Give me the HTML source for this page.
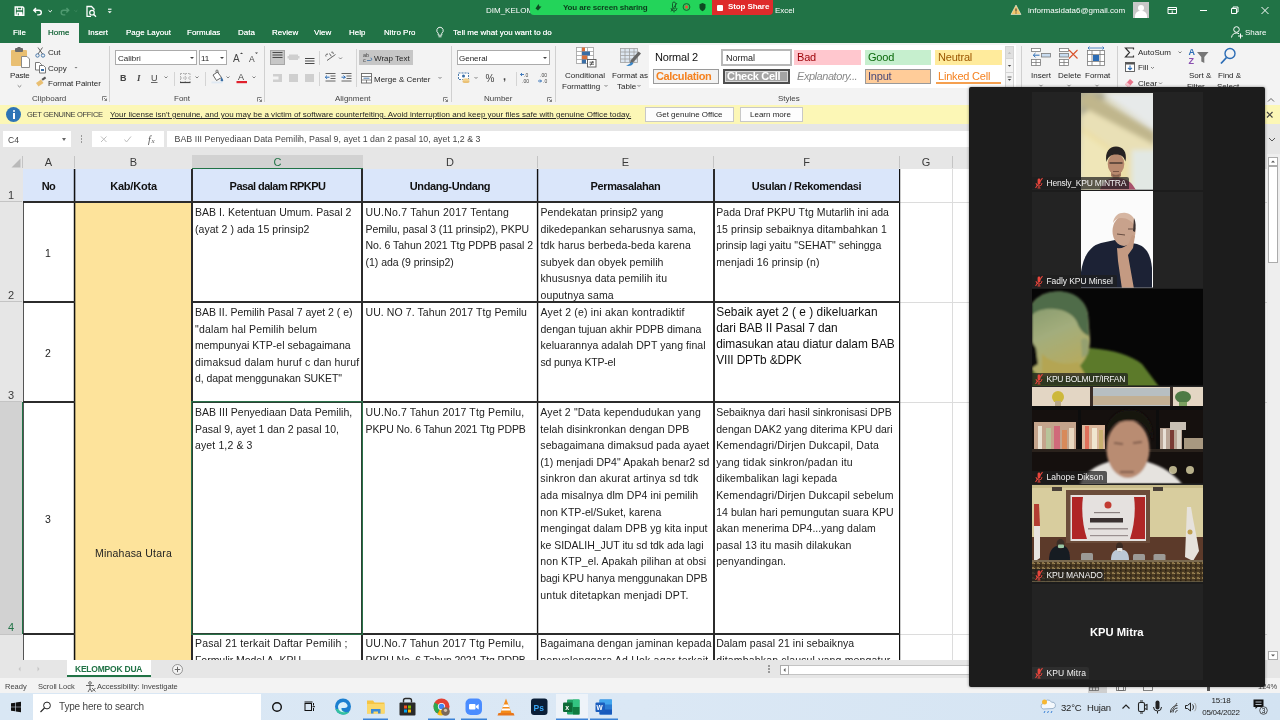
<!DOCTYPE html>
<html><head><meta charset="utf-8">
<style>
*{box-sizing:border-box;margin:0;padding:0}
html,body{width:1280px;height:720px;overflow:hidden;background:#fff;font-family:"Liberation Sans",sans-serif;font-size:9px;color:#262626}
.a{position:absolute;white-space:nowrap}
#top{left:0;top:0;width:1280px;height:43px;background:#217346}
#ribbon{left:0;top:43px;width:1280px;height:62px;background:#f3f3f3}
#ybar{left:0;top:105px;width:1280px;height:19px;background:#fcf7b6}
#fbar{left:0;top:124px;width:1280px;height:30px;background:#e6e6e6}
#colhdr{left:0;top:154px;width:1280px;height:15px;background:#e6e6e6}
#rowhdr{left:0;top:169px;width:23px;height:491px;background:#e6e6e6}
#grid{left:23px;top:169px;width:1244px;height:491px;background:#fff;overflow:hidden}
#tabs{left:0;top:660px;width:1280px;height:18px;background:#e6e6e6}
#status{left:0;top:678px;width:1280px;height:15px;background:#f3f3f3}
#task{left:0;top:693px;width:1280px;height:27px;background:linear-gradient(90deg,#d9e7f4,#dbe8f5 50%,#d3e3f2)}
</style></head><body><div id="root" style="position:absolute;left:0;top:0;width:1280px;height:720px;overflow:hidden;will-change:transform">
<div id="top" class="a"></div>
<div id="ribbon" class="a"></div>
<div id="ybar" class="a"></div>
<div id="fbar" class="a"></div>
<div id="colhdr" class="a"></div>
<div id="rowhdr" class="a"></div>
<div id="grid" class="a"></div>
<style>
.t8{font-size:8px;line-height:10px}
.w{color:#fff}
.tab{top:28px;color:#fff;font-size:8px;line-height:10px;text-shadow:0 0 .6px rgba(255,255,255,.8)}
</style>
<svg class="a" style="left:0;top:0" width="130" height="22" viewBox="0 0 130 22">
 <g fill="none" stroke="#fff" stroke-width="1.4">
  <path d="M15.200 7h7.600l1 1v7.300h-8.600z"/><path d="M17.300 7v2.800h4.400v-2.800" stroke-width="1.100"/><path d="M17 15.300v-3h5v3z" fill="#fff" stroke-width="1"/><path d="M18.300 13.300v2" stroke="#217346" stroke-width="1"/>
  <path d="M36 8l-2.200 2.300 2.300 2.100M34 10.300h5a2.300 2.300 0 0 1 0 4.600h-1.800" />
  <path d="M48.500 10.300l1.700 1.600 1.700-1.600" stroke-width="1"/>
  <path d="M66.500 8l2.200 2.300-2.300 2.100M68.500 10.300h-5a2.300 2.300 0 0 0 0 4.600h1.800" stroke="#4f9a70"/>
  <path d="M74.500 10.300l1.400 1.400 1.400-1.400" stroke="#3f8a60" stroke-width="0.900"/>
  <path d="M91 16.300h-4v-9.800h4.500l2.500 2.500v1.200" stroke-width="1.300"/><circle cx="92" cy="12.700" r="2.300" stroke-width="1.200"/><path d="M93.800 14.500l2.200 2.200" stroke-width="1.300"/>
  <path d="M108 9.200h3.500" stroke-width="1.100"/><path d="M107.700 11.200l2.050 2.100 2.050-2.100z" fill="#fff" stroke="none"/>
 </g>
</svg>
<div class="a" style="left:41px;top:23px;width:38px;height:20px;background:#f3f3f3"></div>
<div class="a tab" style="left:13px">File</div>
<div class="a tab" style="left:48px;color:#1d6a3f;text-shadow:0 0 .6px rgba(29,106,63,.8)">Home</div>
<div class="a tab" style="left:88px">Insert</div>
<div class="a tab" style="left:126px">Page Layout</div>
<div class="a tab" style="left:187px">Formulas</div>
<div class="a tab" style="left:238px">Data</div>
<div class="a tab" style="left:272px">Review</div>
<div class="a tab" style="left:314px">View</div>
<div class="a tab" style="left:349px">Help</div>
<div class="a tab" style="left:384px">Nitro Pro</div>
<svg class="a" style="left:434px;top:26px" width="12" height="14" viewBox="0 0 12 14"><path d="M6 1.200a3.300 3.300 0 0 0-1.800 6v2h3.600v-2a3.300 3.300 0 0 0-1.800-6zM4.500 10.800h3" fill="none" stroke="#fff" stroke-width="0.9"/></svg>
<div class="a tab" style="left:453px">Tell me what you want to do</div>
<div class="a t8 w" style="left:486px;top:6px">DIM_KELOM</div>
<div class="a t8 w" style="left:775px;top:6px">Excel</div>
<div class="a" style="left:530px;top:0;width:183px;height:15px;background:#23d45a;border-radius:0 0 0 4px"></div>
<div class="a" style="left:712px;top:0;width:61px;height:15px;background:#de2b2b;border-radius:0 0 4px 0"></div>
<div class="a" style="left:563px;top:2.500px;font-size:8px;line-height:10px;font-weight:700;color:#0b3d1c;letter-spacing:-0.15px">You are screen sharing</div>
<svg class="a" style="left:530px;top:0" width="183" height="14" viewBox="0 0 183 14">
 <path d="M5.500 8.500l3-4.500 1 2.500h2l-3.500 4z" fill="#0d4a22"/>
 <path d="M142.500 3.500v4a1.500 1.500 0 0 0 3 0v-4a1.500 1.500 0 0 0-3 0zM141 8a3 3 0 0 0 6 0M144 11v1.500" fill="none" stroke="#14602d" stroke-width="1"/><path d="M141 11.500l6-8.500" stroke="#14602d" stroke-width="1"/>
 <circle cx="156.500" cy="7" r="3.400" fill="none" stroke="#14602d" stroke-width="1"/><circle cx="156.500" cy="7" r="1.700" fill="#e05a3a"/>
 <path d="M172.500 3l3 1.200v3c0 2-1.500 3.300-3 4-1.500-.7-3-2-3-4v-3z" fill="#0d4a22"/>
</svg>
<div class="a" style="left:717px;top:4.500px;width:6px;height:6px;background:#fff;border-radius:1px"></div>
<div class="a" style="left:728px;top:2px;font-size:8px;line-height:10px;font-weight:700;color:#fff;letter-spacing:-0.1px">Stop Share</div>
<svg class="a" style="left:1010px;top:4px" width="12" height="12" viewBox="0 0 12 12"><path d="M6 1l5 9.500h-10z" fill="#f2c56b" stroke="#fff" stroke-width="0.500"/><path d="M6 4.500v3M6 8.500v1" stroke="#333" stroke-width="1"/></svg>
<div class="a t8 w" style="left:1028px;top:6px">informasidata6@gmail.com</div>
<div class="a" style="left:1133px;top:2px;width:16px;height:16px;background:#c8c8c8;overflow:hidden"><div class="a" style="left:5px;top:3px;width:6px;height:6px;border-radius:3px;background:#fff"></div><div class="a" style="left:2px;top:9px;width:12px;height:10px;border-radius:5px 5px 0 0;background:#fff"></div></div>
<svg class="a" style="left:1160px;top:0" width="120" height="22" viewBox="0 0 120 22"><g fill="none" stroke="#fff" stroke-width="1">
 <path d="M8 7.500h8.500v6h-8.500zM8 9.500h8.500M12.200 10.500v2.500"/>
 <path d="M40 10.500h7"/>
 <path d="M71.500 8.500h5v5h-5zM73 8.500v-1.500h5v5h-1.500"/>
 <path d="M101.500 7l7 7M108.500 7l-7 7"/>
</g></svg>
<svg class="a" style="left:1230px;top:25px" width="14" height="14" viewBox="0 0 14 14"><g fill="none" stroke="#fff" stroke-width="1"><circle cx="6.500" cy="4.500" r="2.800"/><path d="M1.500 12.500c.5-3 2.500-4.500 5-4.500 1 0 2 .3 2.600.8M10.500 8.500v5M8 11h5"/></g></svg>
<div class="a t8 w" style="left:1245px;top:28px">Share</div>
<style>
.r{font-size:8px;line-height:10px;color:#262626;margin-top:1px}
.sep{width:1px;background:#d0d0d0}
.lbl{font-size:8px;line-height:10px;color:#444;top:94px}
.box{background:#fff;border:1px solid #ababab}
.dd{width:0;height:0;border-left:2px solid transparent;border-right:2px solid transparent;border-top:2.500px solid #444}
</style>
<svg class="a" style="left:8px;top:46px" width="100" height="58" viewBox="0 0 100 58">
 <rect x="3" y="4" width="16" height="16" rx="1" fill="#e9bf72"/>
 <rect x="7" y="2" width="8" height="4" rx="1" fill="#6a6a6a"/><rect x="9.500" y="1" width="3" height="2" fill="#6a6a6a"/>
 <path d="M13.500 10.500h5.500l2.500 2.500v8.500h-8z" fill="#fff" stroke="#8a8a8a" stroke-width="1"/>
 <path d="M9.700 39.300l1.800 1.700 1.800-1.700" fill="none" stroke="#666" stroke-width="0.800"/>
 <g fill="none" stroke="#3a6ea5" stroke-width="0.900"><circle cx="29.500" cy="9.500" r="1.700"/><circle cx="35" cy="9.500" r="1.700"/></g>
 <path d="M30 8l4.500-6.500M34.500 8l-4.500-6.500" stroke="#555" stroke-width="0.900" fill="none"/>
 <g fill="#fff" stroke="#6a6a6a" stroke-width="0.900"><path d="M27.500 16.500h4l2 2v5.500h-6z"/><path d="M31.500 19.500h4l2 2v5.500h-6z"/></g>
 <rect x="33" y="23" width="3" height="2" fill="#3a6ea5"/>
 <path d="M66.500 21l1.500 1.500 1.500-1.500z" fill="#777"/>
 <path d="M28 37l5-3.500 2.500 3.500-5 3.500z" fill="#e9bf72"/><path d="M33.500 33l3.500-2.500 1.200 1.800-3.400 2.400z" fill="#555"/>
 <path d="M94.500 54.500v-4h4M96 52l2.500 2.500M98.500 52.500v2h-2" fill="none" stroke="#666" stroke-width="0.800"/>
</svg>
<div class="a r" style="left:10px;top:70px;letter-spacing:-0.2px">Paste</div>
<div class="a r" style="left:48px;top:47px">Cut</div>
<div class="a r" style="left:48px;top:63px">Copy</div>
<div class="a r" style="left:48px;top:78px">Format Painter</div>
<div class="a lbl" style="left:32px">Clipboard</div>
<div class="a sep" style="left:109px;top:46px;height:56px"></div>
<div class="a box" style="left:115px;top:50px;width:82px;height:15px"></div>
<div class="a box" style="left:199px;top:50px;width:28px;height:15px"></div>
<div class="a r" style="left:118px;top:53px">Calibri</div>
<div class="a r" style="left:201px;top:53px">11</div>
<div class="a dd" style="left:190px;top:57px"></div>
<div class="a dd" style="left:220px;top:57px"></div>
<svg class="a" style="left:110px;top:46px" width="160" height="58" viewBox="0 0 160 58">
 <g font-family="Liberation Sans" fill="#444">
 <text x="123" y="16" font-size="10">A</text><path d="M130 8l1.500-1.500 1.500 1.500z"/>
 <text x="139" y="16" font-size="8.500">A</text><path d="M145 6.500l1.500 1.500 1.500-1.500z"/>
 <text x="10" y="35" font-size="9" font-weight="700">B</text>
 <text x="27" y="35" font-size="9" font-style="italic" font-family="Liberation Serif" font-weight="700">I</text>
 <text x="41" y="34.500" font-size="9">U</text><path d="M41 36.500h6.500" stroke="#444" stroke-width="0.800"/>
 <text x="128" y="34" font-size="9">A</text>
 </g>
 <rect x="126.500" y="35" width="10.500" height="2.200" fill="#e0202c"/>
 <g fill="none" stroke="#666" stroke-width="0.800">
  <path d="M54.500 30.500l1.500 1.500 1.500-1.500M85.500 30.500l1.500 1.500 1.500-1.500M116.500 30.500l1.500 1.500 1.500-1.500M142.500 30.500l1.500 1.500 1.500-1.500"/>
 </g>
 <path d="M64.500 26v14M95.500 26v14" stroke="#d4d4d4" stroke-width="1"/>
 <g stroke="#9a9a9a" stroke-width="0.800" stroke-dasharray="1.500 1" fill="none"><path d="M70.500 27.500h9.500M70.500 32h9.500M75.250 27.500v8.500M70.500 27.500v8.500M80 27.500v8.500"/></g>
 <path d="M70 36.500h10.500" stroke="#444" stroke-width="1.200"/>
 <path d="M103 29l4.500-3 4 5.500-5 3z" fill="#fff" stroke="#555" stroke-width="0.900"/><path d="M111.500 31c1 1.500 1.600 2.500 1.600 3.200a1.200 1.200 0 0 1-2.400 0c0-.7.300-1.700.8-3.200z" fill="#3a6ea5"/><path d="M106 26.500v-1.500a1 1 0 0 1 2 0v2" fill="none" stroke="#555" stroke-width="0.800"/>
 <rect x="101.500" y="35.500" width="11" height="1.800" fill="#dfe9f3"/>
 <path d="M147.500 55.500v-4h4M149 53l2.500 2.500M151.500 53.500v2h-2" fill="none" stroke="#666" stroke-width="0.800"/>
</svg>
<div class="a lbl" style="left:174px">Font</div>
<div class="a sep" style="left:264px;top:46px;height:56px"></div>
<div class="a" style="left:270px;top:50px;width:15px;height:15px;background:#c6c6c6;border:1px solid #a6a6a6"></div>
<div class="a" style="left:359px;top:50px;width:54px;height:15px;background:#c6c6c6"></div>
<svg class="a" style="left:265px;top:46px" width="190" height="58" viewBox="0 0 190 58">
 <g stroke="#4a4a4a" stroke-width="1" fill="none"><path d="M7.500 6.500h10M7.500 9h10M7.500 11.500h10"/><path d="M40 12.500h9.500M40 15h9.500M40 17.500h9.500"/></g>
 <rect x="24" y="8.500" width="9" height="5.500" fill="#cfcfcf"/><rect x="22.500" y="10" width="12" height="2.500" fill="#cfcfcf"/>
 <g fill="#cfcfcf"><rect x="8" y="28" width="9" height="8"/><rect x="8" y="30.500" width="5.500" height="3" fill="#f3f3f3"/>
  <rect x="24" y="28" width="9" height="8"/><rect x="40" y="28" width="9" height="8"/></g>
 <path d="M54.500 5v14M54.500 26v14" stroke="#d4d4d4"/>
 <path d="M91.500 3v38" stroke="#d4d4d4"/>
 <g fill="none" stroke="#555" stroke-width="0.900"><path d="M62 14.500l8.500-6"/><path d="M61 10.500c-.8-1.500.5-3 2-2.300M64.500 7.500l1.800 2.800M66.300 6.300c1.200-.8 2.500.3 1.800 1.700"/><path d="M74 11.500l1.500 1.500 1.500-1.500" stroke="#666" stroke-width="0.800"/></g>
 <g stroke="#555" stroke-width="0.900" fill="none"><path d="M60.500 27.500h10M65.500 30h5M65.500 32.500h5M60.500 35h10"/><path d="M76.500 27.500h10M81.500 30h5M81.500 32.500h5M76.500 35h10"/></g>
 <g stroke="#2b6cb5" stroke-width="1" fill="none"><path d="M64.500 31.200h-4M62 29.500l-1.700 1.700 1.700 1.700"/><path d="M76.500 31.200h4M78.500 29.500l1.700 1.700-1.700 1.700"/></g>
 <g font-family="Liberation Sans" font-size="5.500" fill="#444"><text x="98" y="10.500">ab</text><text x="98" y="16">c</text></g><path d="M102 14.500h3.500a1 1 0 0 0 0-2.500" fill="none" stroke="#3a6ea5" stroke-width="0.800"/>
 <g fill="#fff" stroke="#666" stroke-width="0.900"><rect x="96.500" y="27.500" width="10" height="9.500"/></g><path d="M96.500 30.500h10M96.500 34h10M101.500 34v3" stroke="#666" stroke-width="0.800"/><path d="M98.500 32.200h6" stroke="#3a6ea5" stroke-width="0.900"/>
 <path d="M173.500 31l1.500 1.500 1.500-1.500" fill="none" stroke="#666" stroke-width="0.800"/>
 <path d="M178.500 55.500v-4h4M180 53l2.500 2.500M182.500 53.500v2h-2" fill="none" stroke="#666" stroke-width="0.800"/>
</svg>
<div class="a r" style="left:374px;top:53px">Wrap Text</div>
<div class="a r" style="left:374px;top:74px">Merge &amp; Center</div>
<div class="a lbl" style="left:335px">Alignment</div>
<div class="a sep" style="left:451px;top:46px;height:56px"></div>
<div class="a box" style="left:457px;top:50px;width:93px;height:15px"></div>
<div class="a r" style="left:459px;top:53px">General</div>
<div class="a dd" style="left:543px;top:57px"></div>
<svg class="a" style="left:452px;top:46px" width="104" height="58" viewBox="0 0 104 58">
 <rect x="6.500" y="27" width="10" height="6.500" fill="#fff" stroke="#3a6ea5" stroke-width="0.900" stroke-dasharray="2 1"/><circle cx="11.500" cy="30" r="1.500" fill="#3a6ea5"/>
 <ellipse cx="14" cy="35.500" rx="3.500" ry="1.500" fill="#e9bf72"/><ellipse cx="14" cy="33.800" rx="3.500" ry="1.500" fill="#f1d08e"/>
 <path d="M22.500 31l1.500 1.500 1.500-1.500" fill="none" stroke="#666" stroke-width="0.800"/>
 <g font-family="Liberation Sans" fill="#444"><text x="33.500" y="36" font-size="10">%</text><text x="51" y="34" font-size="11" font-weight="700">,</text>
 <text x="72" y="31" font-size="5">.0</text><text x="70" y="37" font-size="5">.00</text><text x="88" y="31" font-size="5">.00</text><text x="91" y="37" font-size="5">.0</text></g>
 <path d="M64.500 26v14" stroke="#d4d4d4"/>
 <g stroke="#2b6cb5" stroke-width="0.900" fill="none"><path d="M72 28.500h-3.500M70 27l-1.500 1.500 1.500 1.500"/><path d="M86 35h3.500M88 33.500l1.500 1.500-1.500 1.500"/></g>
 <path d="M95.500 55.500v-4h4M97 53l2.500 2.500M99.500 53.500v2h-2" fill="none" stroke="#666" stroke-width="0.800"/>
</svg>
<div class="a lbl" style="left:484px">Number</div>
<div class="a sep" style="left:555px;top:46px;height:56px"></div>
<svg class="a" style="left:556px;top:44px" width="94" height="28" viewBox="0 0 94 28">
 <g stroke="#a0a0a0" stroke-width="0.800" fill="#fff"><rect x="20.500" y="3.500" width="17" height="16"/><path d="M20.500 7.500h17M20.500 11.500h17M20.500 15.500h17M26 3.500v16M31.500 3.500v16"/></g>
 <rect x="26" y="3.500" width="3" height="4" fill="#d9703a"/><rect x="26" y="7.500" width="8" height="4" fill="#3a6ea5"/><rect x="26" y="11.500" width="5" height="4" fill="#d9703a"/><rect x="26" y="15.500" width="4" height="4" fill="#3a6ea5"/>
 <rect x="31.500" y="15.500" width="8.500" height="7.500" fill="#fff" stroke="#555" stroke-width="0.900"/><path d="M33.500 18.200h4.500M33.500 20.200h4.500M37 17l-2.500 4.500" stroke="#333" stroke-width="0.800"/>
 <g stroke="#a0a0a0" stroke-width="0.800" fill="#dde6f0"><rect x="64.500" y="4.500" width="17" height="14"/><path d="M64.500 8h17M64.500 11.500h17M64.500 15h17M69 4.500v14M73.500 4.500v14M78 4.500v14"/></g>
 <path d="M82.500 7.500l2.500 2-8 9-3 1 .5-3z" fill="#666"/><path d="M70 21.500c2-.5 4-1.500 5.500-3.500l2 1.500c-2 2.500-5 3-7.500 2z" fill="#3a86c8"/>
</svg>
<div class="a r" style="left:565px;top:70px">Conditional</div>
<div class="a r" style="left:562px;top:81px">Formatting</div>
<div class="a r" style="left:612px;top:70px">Format as</div>
<div class="a r" style="left:617px;top:81px">Table</div>
<svg class="a" style="left:600px;top:82px" width="50" height="8" viewBox="0 0 50 8"><path d="M4.500 3l1.500 1.500 1.500-1.500M37.500 3l1.500 1.500 1.500-1.500" fill="none" stroke="#666" stroke-width="0.800"/></svg>
<div class="a" style="left:649px;top:45px;width:367px;height:43px;background:#fff"></div>
<style>.sty{font-size:11px;line-height:13px;letter-spacing:-0.2px}</style>
<div class="a sty" style="left:655px;top:51px;color:#111">Normal 2</div>
<div class="a" style="left:721px;top:49px;width:71px;height:17px;background:#fff;border:2px solid #b8b8b8;outline:0"></div>
<div class="a r" style="left:726px;top:52px;font-size:9px;color:#222">Normal</div>
<div class="a" style="left:794px;top:50px;width:67px;height:15px;background:#ffc7ce"></div>
<div class="a sty" style="left:797px;top:51px;color:#9c0006">Bad</div>
<div class="a" style="left:865px;top:50px;width:66px;height:15px;background:#c6efce"></div>
<div class="a sty" style="left:868px;top:51px;color:#0b6a0b">Good</div>
<div class="a" style="left:935px;top:50px;width:67px;height:15px;background:#ffeb9c"></div>
<div class="a sty" style="left:938px;top:51px;color:#9c5700">Neutral</div>
<div class="a" style="left:653px;top:69px;width:66px;height:15px;background:#f2f2f2;border:1px solid #9a9a9a"></div>
<div class="a sty" style="left:656px;top:70px;color:#f58220;font-weight:700;letter-spacing:-0.35px">Calculation</div>
<div class="a" style="left:723px;top:69px;width:67px;height:15px;background:#a5a5a5;border:2px solid #4f4f4f;box-shadow:inset 0 0 0 1px #d8d8d8"></div>
<div class="a sty" style="left:727px;top:70px;color:#fff;font-weight:700;letter-spacing:-0.3px">Check Cell</div>
<div class="a sty" style="left:797px;top:70px;color:#8a8a8a;font-style:italic;letter-spacing:-0.45px">Explanatory...</div>
<div class="a" style="left:865px;top:69px;width:66px;height:15px;background:#ffcc99;border:1px solid #9a9a9a"></div>
<div class="a sty" style="left:868px;top:70px;color:#4a4a7a">Input</div>
<div class="a sty" style="left:938px;top:70px;color:#f58220">Linked Cell</div>
<div class="a" style="left:936px;top:82px;width:65px;height:2px;background:#f5a050"></div>
<div class="a" style="left:1005px;top:46px;width:9px;height:42px;background:#f3f3f3;border:1px solid #d4d4d4"></div>
<div class="a" style="left:1005px;top:46px;width:9px;height:13px;background:#e0e0e0;border:1px solid #d4d4d4"></div>
<div class="a" style="left:1005px;top:72px;width:9px;height:1px;background:#d4d4d4"></div>
<svg class="a" style="left:1005px;top:46px" width="9" height="40" viewBox="0 0 9 40"><path d="M2.800 7.800l1.700-1.800 1.700 1.800z" fill="#b8b8b8"/><path d="M2.800 19l1.700 1.800 1.700-1.800z" fill="#444"/><path d="M2.500 31h4" stroke="#444" stroke-width="0.800"/><path d="M2.800 33l1.700 1.800 1.700-1.800z" fill="#444"/></svg>
<div class="a lbl" style="left:778px">Styles</div>
<div class="a sep" style="left:1021px;top:46px;height:56px"></div>
<svg class="a" style="left:1026px;top:44px" width="92" height="48" viewBox="0 0 92 48">
 <g fill="#fff" stroke="#7a7a7a" stroke-width="0.800">
  <rect x="5.500" y="4.500" width="9" height="3"/><rect x="5.500" y="15.500" width="9" height="6"/><path d="M5.500 18.500h9M10 15.500v6"/>
  <rect x="15.500" y="9.500" width="9" height="3.500" fill="#c9dcf0"/>
  <rect x="33.500" y="4.500" width="9" height="3"/><rect x="33.500" y="15.500" width="9" height="6"/><path d="M33.500 18.500h9M38 15.500v6"/><rect x="33.500" y="9.500" width="9" height="3.500" fill="#c9dcf0"/>
  <rect x="61.500" y="6.500" width="17" height="15"/><path d="M61.500 10.500h17M61.500 17.500h17M66 6.500v15M74 6.500v15"/>
 </g>
 <path d="M13.500 11.200h-6M9.500 9l-2.200 2.200 2.200 2.200" fill="none" stroke="#2b6cb5" stroke-width="1"/>
 <path d="M43 6l8.500 8.500M51.500 6l-8.500 8.500" stroke="#d9532c" stroke-width="1.100"/>
 <rect x="67" y="11" width="6" height="6" fill="#2b6cb5"/>
 <path d="M62 4h16M63.500 2.500l-1.500 1.500 1.500 1.500M76.500 2.500l1.500 1.500-1.500 1.500" fill="none" stroke="#2b6cb5" stroke-width="0.800"/>
 <path d="M13.500 40.800l1.500 1.500 1.500-1.500M41.500 40.800l1.500 1.500 1.500-1.500M69.500 40.800l1.500 1.500 1.500-1.500" fill="none" stroke="#666" stroke-width="0.800"/>
</svg>
<div class="a r" style="left:1031px;top:70px">Insert</div>
<div class="a r" style="left:1058px;top:70px">Delete</div>
<div class="a r" style="left:1085px;top:70px">Format</div>
<div class="a sep" style="left:1117px;top:46px;height:56px"></div>
<svg class="a" style="left:1120px;top:44px" width="150" height="48" viewBox="0 0 150 48">
 <path d="M13.500 5.500v-1.500h-8l4 4.500-4 4.500h8v-1.500" fill="none" stroke="#333" stroke-width="1.200"/>
 <path d="M58.500 7.500l1.500 1.500 1.500-1.500M31 23l1.500 1.500 1.500-1.500M39 38.500l1.500 1.500 1.500-1.500" fill="none" stroke="#666" stroke-width="0.800"/>
 <rect x="5.500" y="18.500" width="9" height="9" fill="#fff" stroke="#555" stroke-width="0.900"/><rect x="5.500" y="18.500" width="9" height="2" fill="#555"/><path d="M10 21.500v4M8 23.800l2 2 2-2" fill="none" stroke="#2b6cb5" stroke-width="1.100"/>
 <path d="M5 40.500l5-5.500 3.500 3-5 5.500z" fill="#e8738a"/><path d="M5 40.500l2-2.200 3.500 3-2 2.200z" fill="#f6c7cf"/>
 <g font-family="Liberation Sans" font-weight="700"><text x="68.500" y="11" font-size="9" fill="#2b6cb5">A</text><text x="68.500" y="20" font-size="9" fill="#8a4fb0">Z</text></g>
 <path d="M77 8h11.500l-4.200 5v6l-3 -1.500v-4.500z" fill="#777"/>
 <circle cx="110" cy="9.500" r="5" fill="none" stroke="#2b6cb5" stroke-width="1.400"/><path d="M106.500 13.500l-5.500 6" stroke="#2b6cb5" stroke-width="1.800"/>
 <path d="M91.500 43l1.500 1.500 1.500-1.500M122.500 43l1.500 1.500 1.500-1.500" fill="none" stroke="#666" stroke-width="0.800"/>
</svg>
<div class="a r" style="left:1138px;top:47px">AutoSum</div>
<div class="a r" style="left:1138px;top:62px">Fill</div>
<div class="a r" style="left:1138px;top:78px">Clear</div>
<div class="a r" style="left:1189px;top:70px">Sort &amp;</div>
<div class="a r" style="left:1187px;top:81px">Filter</div>
<div class="a r" style="left:1218px;top:70px">Find &amp;</div>
<div class="a r" style="left:1217px;top:81px">Select</div>
<svg class="a" style="left:1266px;top:96px" width="10" height="8" viewBox="0 0 10 8"><path d="M2 5.500l3-3 3 3" fill="none" stroke="#555" stroke-width="0.900"/></svg>
<div class="a" style="left:6px;top:107px;width:15px;height:15px;border-radius:8px;background:#2e74b5"></div>
<div class="a" style="left:12.500px;top:109.500px;width:2px;height:2px;background:#fff;border-radius:1px"></div>
<div class="a" style="left:12.500px;top:112.500px;width:2px;height:6.500px;background:#fff"></div>
<div class="a" style="left:27px;top:110px;font-size:7.5px;line-height:10px;color:#3a3a3a;letter-spacing:-0.3px">GET GENUINE OFFICE</div>
<div class="a" style="left:110px;top:110px;font-size:8px;line-height:10px;color:#262626;text-decoration:underline;letter-spacing:0.015px">Your license isn't genuine, and you may be a victim of software counterfeiting. Avoid interruption and keep your files safe with genuine Office today.</div>
<div class="a" style="left:645px;top:107px;width:89px;height:15px;background:#fdfdfd;border:1px solid #c8c8c8"></div>
<div class="a" style="left:740px;top:107px;width:63px;height:15px;background:#fdfdfd;border:1px solid #c8c8c8"></div>
<div class="a r" style="left:656px;top:109px">Get genuine Office</div>
<div class="a r" style="left:750px;top:109px">Learn more</div>
<svg class="a" style="left:1264px;top:109px" width="12" height="12" viewBox="0 0 12 12"><path d="M3 3l5.500 5.500M8.500 3l-5.500 5.500" stroke="#444" stroke-width="1.200"/></svg>
<div class="a" style="left:3px;top:131px;width:68px;height:16px;background:#fff"></div>
<div class="a" style="left:8px;top:134.500px;font-size:8.500px;line-height:10px;color:#444">C4</div>
<div class="a" style="left:62px;top:137.500px;width:0;height:0;border-left:2.500px solid transparent;border-right:2.500px solid transparent;border-top:3px solid #666"></div>
<div class="a" style="left:80.500px;top:135px;width:1.500px;height:1.500px;background:#999;box-shadow:0 3px 0 #999,0 6px 0 #999"></div>
<div class="a" style="left:92px;top:131px;width:72px;height:16px;background:#fff"></div>
<svg class="a" style="left:92px;top:131px" width="72" height="16" viewBox="0 0 72 16"><path d="M9 5.500l5.500 5.500M14.500 5.500l-5.500 5.500" stroke="#bdbdbd" stroke-width="1"/><path d="M32.500 8.500l2 2.500 4.500-5.500" fill="none" stroke="#bdbdbd" stroke-width="1"/><text x="56" y="11.500" font-family="Liberation Serif" font-style="italic" font-size="10" fill="#555">f</text><text x="59.500" y="12" font-family="Liberation Serif" font-style="italic" font-size="7" fill="#555">x</text></svg>
<div class="a" style="left:167px;top:131px;width:1097px;height:16px;background:#fff"></div>
<div class="a" style="left:174.500px;top:134px;font-size:8.800px;line-height:11px;color:#444;letter-spacing:0.03px">BAB III Penyediaan Data Pemilih, Pasal 9, ayet 1 dan 2 pasal 10, ayet 1,2 &amp; 3</div>
<svg class="a" style="left:1264px;top:131px" width="16" height="16" viewBox="0 0 16 16"><path d="M5 7l3 3 3-3" fill="none" stroke="#555" stroke-width="1"/></svg>
<style>
.ct div{white-space:nowrap}
.bl{background:#2b2b2b}
.gl{background:#dcdcdc}
.ch{top:156px;font-size:11px;line-height:12px;color:#3a3a3a;width:20px;text-align:center}
.rh{left:0;width:22px;text-align:center;font-size:11px;line-height:12px;color:#3a3a3a}
.hd{top:178.500px;font-size:11px;line-height:14px;font-weight:700;color:#111;text-align:center}
.num{font-size:10.500px;line-height:14px;color:#222;width:20px;text-align:center;left:38px}
</style>
<div class="a" style="left:192px;top:155px;width:171px;height:14px;background:#d2d2d2"></div>
<div class="a" style="left:192px;top:168px;width:171px;height:1.500px;background:#217346"></div>
<div class="a" style="left:22px;top:156px;width:1px;height:12px;background:#c4c4c4"></div>
<div class="a" style="left:74px;top:156px;width:1px;height:12px;background:#c4c4c4"></div>
<div class="a" style="left:537px;top:156px;width:1px;height:12px;background:#c4c4c4"></div>
<div class="a" style="left:713px;top:156px;width:1px;height:12px;background:#c4c4c4"></div>
<div class="a" style="left:899px;top:156px;width:1px;height:12px;background:#c4c4c4"></div>
<div class="a" style="left:952px;top:156px;width:1px;height:12px;background:#c4c4c4"></div>
<svg class="a" style="left:10px;top:157px" width="12" height="12" viewBox="0 0 12 12"><path d="M10.500 1.500v9h-9z" fill="#b9b9b9"/></svg>
<div class="a ch" style="left:38.500px">A</div>
<div class="a ch" style="left:123.500px">B</div>
<div class="a ch" style="left:267.500px;color:#217346">C</div>
<div class="a ch" style="left:440px">D</div>
<div class="a ch" style="left:615.500px">E</div>
<div class="a ch" style="left:796.500px">F</div>
<div class="a ch" style="left:916px">G</div>
<div class="a" style="left:0;top:402px;width:22px;height:232px;background:#d2d2d2"></div>
<div class="a" style="left:22px;top:402px;width:1.500px;height:232px;background:#217346"></div>
<div class="a" style="left:0;top:201px;width:22px;height:1px;background:#c4c4c4"></div>
<div class="a" style="left:0;top:301px;width:22px;height:1px;background:#c4c4c4"></div>
<div class="a" style="left:0;top:401px;width:22px;height:1px;background:#c4c4c4"></div>
<div class="a" style="left:0;top:634px;width:22px;height:1px;background:#c4c4c4"></div>
<div class="a rh" style="top:189px">1</div>
<div class="a rh" style="top:289px">2</div>
<div class="a rh" style="top:389px">3</div>
<div class="a rh" style="top:621px;color:#217346">4</div>
<div class="a" style="left:23px;top:169px;width:877px;height:32px;background:#dae6fa"></div>
<div class="a" style="left:75px;top:202px;width:117px;height:458px;background:#fde39b"></div>
<div class="a gl" style="left:952px;top:169px;width:1px;height:491px"></div>
<div class="a gl" style="left:900px;top:202px;width:367px;height:1px"></div>
<div class="a gl" style="left:900px;top:302px;width:367px;height:1px"></div>
<div class="a gl" style="left:900px;top:402px;width:367px;height:1px"></div>
<div class="a gl" style="left:900px;top:634px;width:367px;height:1px"></div>
<div class="a bl" style="left:22.500px;top:202px;width:1px;height:458px;background:#555"></div>
<div class="a bl" style="left:74px;top:169px;width:1px;height:491px;background:#111;box-shadow:-1px 0 0 rgba(0,0,0,.2),1px 0 0 rgba(0,0,0,.3)"></div>
<div class="a bl" style="left:191px;top:169px;width:2px;height:491px"></div>
<div class="a bl" style="left:361px;top:169px;width:2px;height:491px"></div>
<div class="a bl" style="left:537px;top:169px;width:1px;height:491px;background:#111;box-shadow:-1px 0 0 rgba(0,0,0,.12),1px 0 0 rgba(0,0,0,.25)"></div>
<div class="a bl" style="left:712.500px;top:169px;width:2px;height:491px"></div>
<div class="a bl" style="left:899px;top:169px;width:1px;height:491px;background:#111;box-shadow:1px 0 0 rgba(0,0,0,.2)"></div>
<div class="a bl" style="left:23px;top:201px;width:877px;height:2px"></div>
<div class="a bl" style="left:23px;top:301px;width:52px;height:2px"></div>
<div class="a bl" style="left:192px;top:301px;width:708px;height:2px"></div>
<div class="a bl" style="left:23px;top:401px;width:52px;height:2px"></div>
<div class="a bl" style="left:192px;top:401px;width:708px;height:2px"></div>
<div class="a bl" style="left:23px;top:633px;width:52px;height:2px"></div>
<div class="a bl" style="left:192px;top:633px;width:708px;height:2px"></div>
<div class="a" style="left:191px;top:401px;width:172px;height:234px;border:1px solid #2a7048;box-shadow:inset 0 0 0 1px rgba(42,112,72,.35)"></div>
<div class="a hd" style="left:23px;width:51px;letter-spacing:-0.5px">No</div>
<div class="a hd" style="left:75px;width:117px;letter-spacing:-0.2px">Kab/Kota</div>
<div class="a hd" style="left:193px;width:169px;letter-spacing:-0.55px">Pasal dalam RPKPU</div>
<div class="a hd" style="left:363px;width:174px;letter-spacing:-0.4px">Undang-Undang</div>
<div class="a hd" style="left:538px;width:175px;letter-spacing:-0.4px">Permasalahan</div>
<div class="a hd" style="left:714px;width:185px;letter-spacing:-0.4px">Usulan / Rekomendasi</div>
<div class="a num" style="top:245.500px">1</div>
<div class="a num" style="top:345.500px">2</div>
<div class="a num" style="top:511.500px">3</div>
<div class="a" style="left:75px;top:545.500px;width:117px;text-align:center;font-size:10.500px;line-height:14px;color:#222;letter-spacing:0.2px">Minahasa Utara</div>
<div class="a ct" style="left:195px;top:204.1px;font-size:10.5px;line-height:16.6px;color:#222">
<div style="letter-spacing:0.040px">BAB I. Ketentuan Umum. Pasal 2</div>
<div style="letter-spacing:0.049px">(ayat 2 ) ada 15 prinsip2</div>
</div>
<div class="a ct" style="left:365.5px;top:204.1px;font-size:10.5px;line-height:16.6px;color:#222">
<div style="letter-spacing:0.217px">UU.No.7 Tahun 2017 Tentang</div>
<div style="letter-spacing:-0.089px">Pemilu, pasal 3 (11 prinsip2), PKPU</div>
<div style="letter-spacing:-0.041px">No. 6 Tahun 2021 Ttg PDPB pasal 2</div>
<div style="letter-spacing:-0.022px">(1) ada (9 prinsip2)</div>
</div>
<div class="a ct" style="left:540.5px;top:204.1px;font-size:10.5px;line-height:16.6px;color:#222">
<div style="letter-spacing:0.064px">Pendekatan prinsip2 yang</div>
<div style="letter-spacing:0.050px">dikedepankan seharusnya sama,</div>
<div style="letter-spacing:0.138px">tdk harus berbeda-beda karena</div>
<div style="letter-spacing:0.090px">subyek dan obyek pemilih</div>
<div style="letter-spacing:0.110px">khususnya data pemilih itu</div>
<div style="letter-spacing:0.107px">ouputnya sama</div>
</div>
<div class="a ct" style="left:716.2px;top:204.1px;font-size:10.5px;line-height:16.6px;color:#222">
<div style="letter-spacing:0.056px">Pada Draf PKPU Ttg Mutarlih ini ada</div>
<div style="letter-spacing:0.096px">15 prinsip sebaiknya ditambahkan 1</div>
<div style="letter-spacing:-0.010px">prinsip lagi yaitu "SEHAT" sehingga</div>
<div style="letter-spacing:0.106px">menjadi 16 prinsip (n)</div>
</div>
<div class="a ct" style="left:195px;top:304.1px;font-size:10.5px;line-height:16.6px;color:#222">
<div style="letter-spacing:-0.019px">BAB II. Pemilih Pasal 7 ayet 2 ( e)</div>
<div style="letter-spacing:0.164px">"dalam hal Pemilih belum</div>
<div style="letter-spacing:0.013px">mempunyai KTP-el sebagaimana</div>
<div style="letter-spacing:0.175px">dimaksud dalam huruf c dan huruf</div>
<div style="letter-spacing:-0.080px">d, dapat menggunakan SUKET"</div>
</div>
<div class="a ct" style="left:365.5px;top:304.1px;font-size:10.5px;line-height:16.6px;color:#222">
<div style="letter-spacing:0.082px">UU. NO 7. Tahun 2017 Ttg Pemilu</div>
</div>
<div class="a ct" style="left:540.5px;top:304.1px;font-size:10.5px;line-height:16.6px;color:#222">
<div style="letter-spacing:0.189px">Ayet 2 (e) ini akan kontradiktif</div>
<div style="letter-spacing:-0.010px">dengan tujuan akhir PDPB dimana</div>
<div style="letter-spacing:0.058px">keluarannya adalah DPT yang final</div>
<div style="letter-spacing:-0.180px">sd punya KTP-el</div>
</div>
<div class="a ct" style="left:716.2px;top:304.0px;font-size:11.9px;line-height:16.03px;color:#111">
<div style="letter-spacing:0.026px">Sebaik ayet 2 ( e ) dikeluarkan</div>
<div style="letter-spacing:-0.066px">dari BAB II Pasal 7 dan</div>
<div style="letter-spacing:-0.040px">dimasukan atau diatur dalam BAB</div>
<div style="letter-spacing:-0.133px">VIII DPTb &amp;DPK</div>
</div>
<div class="a ct" style="left:195px;top:404.0px;font-size:10.5px;line-height:16.6px;color:#222">
<div style="letter-spacing:0.025px">BAB III Penyediaan Data Pemilih,</div>
<div style="letter-spacing:-0.006px">Pasal 9, ayet 1 dan 2 pasal 10,</div>
<div style="letter-spacing:0.123px">ayet 1,2 &amp; 3</div>
</div>
<div class="a ct" style="left:365.5px;top:404.0px;font-size:10.5px;line-height:16.6px;color:#222">
<div style="letter-spacing:0.169px">UU.No.7 Tahun 2017 Ttg Pemilu,</div>
<div style="letter-spacing:-0.115px">PKPU No. 6 Tahun 2021 Ttg PDPB</div>
</div>
<div class="a ct" style="left:540.3px;top:404.0px;font-size:10.5px;line-height:16.6px;color:#222">
<div style="letter-spacing:0.158px">Ayet 2 "Data kependudukan yang</div>
<div style="letter-spacing:0.068px">telah disinkronkan dengan DPB</div>
<div style="letter-spacing:0.107px">sebagaimana dimaksud pada ayaet</div>
<div style="letter-spacing:0.057px">(1) menjadi DP4" Apakah benar2 sd</div>
<div style="letter-spacing:0.192px">sinkron dan akurat artinya sd tdk</div>
<div style="letter-spacing:0.105px">ada misalnya dlm DP4 ini pemilih</div>
<div style="letter-spacing:0.033px">non KTP-el/Suket, karena</div>
<div style="letter-spacing:0.100px">mengingat dalam DPB yg kita input</div>
<div style="letter-spacing:-0.036px">ke SIDALIH_JUT itu sd tdk ada lagi</div>
<div style="letter-spacing:0.092px">non KTP_el. Apakah pilihan at obsi</div>
<div style="letter-spacing:-0.092px">bagi KPU hanya menggunakan DPB</div>
<div style="letter-spacing:0.203px">untuk ditetapkan menjadi DPT.</div>
</div>
<div class="a ct" style="left:716.2px;top:404.0px;font-size:10.5px;line-height:16.6px;color:#222">
<div style="letter-spacing:-0.018px">Sebaiknya dari hasil sinkronisasi DPB</div>
<div style="letter-spacing:0.007px">dengan DAK2 yang diterima KPU dari</div>
<div style="letter-spacing:0.147px">Kemendagri/Dirjen Dukcapil, Data</div>
<div style="letter-spacing:0.212px">yang tidak sinkron/padan itu</div>
<div style="letter-spacing:0.134px">dikembalikan lagi kepada</div>
<div style="letter-spacing:0.141px">Kemendagri/Dirjen Dukcapil sebelum</div>
<div style="letter-spacing:0.051px">14 bulan hari pemungutan suara KPU</div>
<div style="letter-spacing:0.029px">akan menerima DP4...yang dalam</div>
<div style="letter-spacing:0.121px">pasal 13 itu masih dilakukan</div>
<div style="letter-spacing:0.074px">penyandingan.</div>
</div>
<div class="a ct" style="left:195px;top:635.2px;font-size:10.5px;line-height:16.6px;color:#222">
<div style="letter-spacing:0.167px">Pasal 21 terkait Daftar Pemilih ;</div>
<div style="letter-spacing:-0.039px">Formulir Model A. KPU</div>
</div>
<div class="a ct" style="left:365.5px;top:635.2px;font-size:10.5px;line-height:16.6px;color:#222">
<div style="letter-spacing:0.169px">UU.No.7 Tahun 2017 Ttg Pemilu,</div>
<div style="letter-spacing:-0.115px">PKPU No. 6 Tahun 2021 Ttg PDPB</div>
</div>
<div class="a ct" style="left:540.3px;top:635.2px;font-size:10.5px;line-height:16.6px;color:#222">
<div style="letter-spacing:0.102px">Bagaimana dengan jaminan kepada</div>
<div style="letter-spacing:0.197px">penyelenggara Ad Hok agar terkait</div>
</div>
<div class="a ct" style="left:716.2px;top:635.2px;font-size:10.5px;line-height:16.6px;color:#222">
<div style="letter-spacing:0.053px">Dalam pasal 21 ini sebaiknya</div>
<div style="letter-spacing:0.166px">ditambahkan clausul yang mengatur</div>
</div>
<div class="a" style="left:1267px;top:154px;width:13px;height:506px;background:#eeeeee"></div>
<div class="a" style="left:1268px;top:157px;width:10px;height:9px;background:#fff;border:1px solid #ababab"></div>
<div class="a" style="left:1268px;top:166px;width:10px;height:97px;background:#fff;border:1px solid #ababab"></div>
<div class="a" style="left:1268px;top:651px;width:10px;height:9px;background:#fff;border:1px solid #ababab"></div>
<svg class="a" style="left:1268px;top:157px" width="10" height="9" viewBox="0 0 10 9"><path d="M3 5.500l2-2 2 2z" fill="#555"/></svg>
<svg class="a" style="left:1268px;top:651px" width="10" height="9" viewBox="0 0 10 9"><path d="M3 3.500l2 2 2-2z" fill="#555"/></svg>
<div id="tabs" class="a"></div>
<div id="status" class="a"></div>
<div id="task" class="a"></div>
<svg class="a" style="left:10px;top:662px" width="40" height="14" viewBox="0 0 40 14"><path d="M10.500 4.500l-2 2.500 2 2.500z M27.500 4.500l2 2.500-2 2.500z" fill="#c6c6c6"/></svg>
<div class="a" style="left:67px;top:660px;width:84px;height:17px;background:#fff;border-bottom:2px solid #217346"></div>
<div class="a" style="left:75px;top:663.500px;font-size:8.500px;line-height:10px;font-weight:700;color:#217346;letter-spacing:-0.22px">KELOMPOK DUA</div>
<svg class="a" style="left:171px;top:663px" width="13" height="13" viewBox="0 0 13 13"><circle cx="6.500" cy="6.500" r="5" fill="#f3f3f3" stroke="#8a8a8a" stroke-width="0.900"/><path d="M6.500 3.800v5.400M3.800 6.500h5.400" stroke="#666" stroke-width="1"/></svg>
<div class="a" style="left:768px;top:665px;width:1.500px;height:1.500px;background:#999;box-shadow:0 3px 0 #999,0 6px 0 #999"></div>
<div class="a" style="left:780px;top:665px;width:480px;height:10px;background:#fff;border:1px solid #c4c4c4"></div>
<div class="a" style="left:780px;top:665px;width:9px;height:10px;background:#fff;border:1px solid #ababab"></div>
<svg class="a" style="left:780px;top:665px" width="9" height="10" viewBox="0 0 9 10"><path d="M5.500 3l-2 2 2 2z" fill="#555"/></svg>
<div class="a" style="left:5px;top:681.500px;font-size:7.500px;line-height:10px;color:#444">Ready</div>
<div class="a" style="left:38px;top:681.500px;font-size:7.500px;line-height:10px;color:#444">Scroll Lock</div>
<svg class="a" style="left:84px;top:680px" width="13" height="13" viewBox="0 0 13 13"><g fill="none" stroke="#555" stroke-width="0.900"><circle cx="6" cy="3" r="1.300"/><path d="M2 5.500h8M6 5.500v3M6 8.500l-2 3.500M6 8.500l2 3.500"/><path d="M8 8l3.500 3.500M11.500 8l-3.500 3.500"/></g></svg>
<div class="a" style="left:97px;top:681.500px;font-size:7.500px;line-height:10px;color:#444;letter-spacing:-0.02px">Accessibility: Investigate</div>
<div class="a" style="left:1088px;top:679px;width:19px;height:14px;background:#cfcfcf"></div>
<svg class="a" style="left:1086px;top:680px" width="80" height="13" viewBox="0 0 80 13"><g fill="none" stroke="#666" stroke-width="0.800"><rect x="3.500" y="2.500" width="9" height="8"/><path d="M3.500 5h9M3.500 7.700h9M6.500 2.500v8M9.500 2.500v8"/><rect x="30.500" y="2.500" width="9" height="8"/><rect x="32.500" y="4.500" width="5" height="6"/><rect x="57.500" y="2.500" width="9" height="8"/><path d="M57.500 6.500h9" stroke-dasharray="1.500 1"/></g></svg>
<div class="a" style="left:1175px;top:686px;width:75px;height:1px;background:#8a8a8a"></div>
<div class="a" style="left:1207px;top:682px;width:2.500px;height:9px;background:#555"></div>
<div class="a" style="left:1258px;top:681.500px;font-size:7.500px;line-height:10px;color:#444">124%</div>
<svg class="a" style="left:10px;top:701px" width="12" height="12" viewBox="0 0 12 12"><path d="M1 2.300l4.200-.6v4h-4.200zM5.800 1.600l5.200-.8v4.900h-5.200zM1 6.300h4.200v4l-4.200-.6zM5.800 6.300h5.200v4.900l-5.200-.8z" fill="#111"/></svg>
<div class="a" style="left:33px;top:694px;width:228px;height:26px;background:#fff"></div>
<svg class="a" style="left:39px;top:700px" width="14" height="14" viewBox="0 0 14 14"><circle cx="8" cy="5.500" r="3.400" fill="none" stroke="#222" stroke-width="1"/><path d="M5.500 8l-4 4" stroke="#222" stroke-width="1.100"/></svg>
<div class="a" style="left:59px;top:701px;font-size:10px;line-height:12px;color:#444;letter-spacing:-0.18px">Type here to search</div>
<svg class="a" style="left:268px;top:694px" width="360" height="26" viewBox="0 0 360 26">
 <circle cx="9" cy="13" r="4.300" fill="none" stroke="#111" stroke-width="1.400"/>
 <g fill="none" stroke="#111" stroke-width="1"><rect x="37" y="9.500" width="6.500" height="7"/><path d="M36.500 8h8M45.500 9v2.500M45.500 14v3M44.500 12.700h2.500"/></g>
 <rect x="288" y="0" width="32" height="26" fill="#eef3f9"/>
 <circle cx="75" cy="12.500" r="8" fill="#1b7fd0"/><path d="M67.500 15a8 8 0 0 0 14 2.500c-3 1.500-7 .5-8-2.500z" fill="#35c1a0"/><path d="M70 12.500a5 5 0 0 1 9.500-1.500c.5 2-1 3-3 3h-3c-.5 2 1 4 3.500 4-4 1-7-2-7-5.500z" fill="#d9f0fb"/>
 <path d="M99 6.500h6l1.500 2h10v11h-17.500z" fill="#f5c443"/><rect x="99" y="10" width="17.500" height="9.500" fill="#fbd86a"/><path d="M103 15h9.500v4.500h-2.500v-2h-4.500v2h-2.500z" fill="#3a8ad8"/>
 <rect x="131.500" y="8.500" width="16" height="13" rx="1" fill="#2a2a2a"/><path d="M135.500 8.500v-2a2 2 0 0 1 2-2h4a2 2 0 0 1 2 2v2" fill="none" stroke="#2a2a2a" stroke-width="1.400"/><rect x="136" y="11.500" width="3" height="3" fill="#f25022"/><rect x="140" y="11.500" width="3" height="3" fill="#7fba00"/><rect x="136" y="15.500" width="3" height="3" fill="#00a4ef"/><rect x="140" y="15.500" width="3" height="3" fill="#ffb900"/>
 <circle cx="173.500" cy="12.500" r="8" fill="#e34133"/><path d="M173.500 12.500l-7-4a8 8 0 0 0 3 11z" fill="#2da94f"/><path d="M173.500 12.500l-4 8a8 8 0 0 0 11.500-5z" fill="#fbbd05"/><circle cx="173.500" cy="12.500" r="3.600" fill="#fff"/><circle cx="173.500" cy="12.500" r="2.800" fill="#4285f4"/><circle cx="177.500" cy="17.500" r="4.300" fill="#7b6a5a"/><circle cx="177.500" cy="16.300" r="1.600" fill="#d8c3ae"/>
 <rect x="197.500" y="4.500" width="16.500" height="16.500" rx="5" fill="#4a8cff"/><rect x="201" y="10" width="6.500" height="5.500" rx="1" fill="#fff"/><path d="M208 12l2.700-2v5.500l-2.700-2z" fill="#fff"/>
 <path d="M238 4.500l5.500 14.500h-11z" fill="#f48b1a"/><path d="M235.800 10.500h4.400l1 2.500h-6.400zM234.300 14.500h7.400l.8 2h-9z" fill="#fff"/><path d="M230.500 19h15l1 2.500h-17z" fill="#e8761a"/>
 <rect x="263" y="4.500" width="16.500" height="16.500" rx="3" fill="#0b1e36"/><text x="265.500" y="16.500" font-family="Liberation Sans" font-size="8.500" font-weight="700" fill="#39a6f5">Ps</text>
 <rect x="299" y="5.500" width="12.500" height="15" rx="1" fill="#21a366"/><rect x="305" y="5.500" width="6.500" height="7.500" fill="#33c481"/><rect x="305" y="13" width="6.500" height="7.500" fill="#107c41"/><rect x="295" y="8.500" width="9.500" height="9.500" rx="1" fill="#0e6b38"/><text x="297.300" y="16" font-family="Liberation Sans" font-size="7" font-weight="700" fill="#fff">x</text>
 <rect x="331.500" y="5.500" width="12.500" height="15" rx="1" fill="#2b7cd3"/><rect x="331.500" y="5.500" width="12.500" height="5" fill="#41a5ee"/><rect x="331.500" y="15.500" width="12.500" height="5" fill="#185abd"/><rect x="327.500" y="8.500" width="9.500" height="9.500" rx="1" fill="#1b5ebe"/><text x="328.600" y="15.800" font-family="Liberation Sans" font-size="6.500" font-weight="700" fill="#fff">W</text>
 <g fill="#3b82d6"><rect x="95" y="24.500" width="25" height="1.500"/><rect x="160" y="24.500" width="27" height="1.500"/><rect x="193" y="24.500" width="26" height="1.500"/><rect x="288" y="24.500" width="32" height="1.500"/><rect x="322" y="24.500" width="28" height="1.500"/></g>
</svg>
<svg class="a" style="left:1040px;top:694px" width="240" height="26" viewBox="0 0 240 26">
 <path d="M3 15a3 3 0 0 1 1-5.800 4 4 0 0 1 7.500-1 3.200 3.200 0 0 1 1.500 6.300z" fill="#f4f8fc" stroke="#8aa4c0" stroke-width="0.800"/><circle cx="4.500" cy="8" r="2.500" fill="#f7b731"/><path d="M5 17l-1 2M8.500 17l-1 2M12 17l-1 2" stroke="#3b82d6" stroke-width="1"/>
 <g fill="none" stroke="#222" stroke-width="1.100"><path d="M82.500 14.500l3.500-3.500 3.500 3.500"/><rect x="98.500" y="8.500" width="6" height="9" rx="1.500"/><path d="M104.500 11.500l2.500-1v5l-2.500-1M100 7h3M100 19h3"/></g>
 <rect x="115.500" y="6.500" width="4" height="9" rx="2" fill="#222"/><path d="M113.500 13a4 4 0 0 0 8 0M117.500 17v2.500" fill="none" stroke="#222" stroke-width="1"/>
 <g fill="none" stroke="#333" stroke-width="1"><path d="M130.500 18.500c0-4 3-7 7-7M133 18.500c0-2.500 2-4.500 4.500-4.500M135.500 18.500c0-1 1-2 2-2"/><path d="M137 9l-6 9.500" stroke="#555"/></g>
 <g fill="none" stroke="#222" stroke-width="1"><path d="M145.500 11.500h2l3-2.500v8l-3-2.500h-2z"/><path d="M152.500 10.500c1.200 1.200 1.200 4 0 5.200" /><path d="M154.500 9c2 2 2 6.200 0 8.200" stroke="#999"/></g>
 <path d="M213.500 5.500h10v7.500h-6l-2 2v-2h-2z" fill="#111"/><path d="M215.500 8h6M215.500 10.500h6" stroke="#dde8f5" stroke-width="0.800"/>
 <circle cx="223.500" cy="16.500" r="3.800" fill="#d6e5f3" stroke="#333" stroke-width="0.800"/><text x="221.700" y="19" font-family="Liberation Sans" font-size="6.500" fill="#111">3</text>
</svg>
<div class="a" style="left:1061px;top:701.500px;font-size:9.500px;line-height:12px;color:#222;letter-spacing:-0.2px">32°C</div>
<div class="a" style="left:1087px;top:701.500px;font-size:9.500px;line-height:12px;color:#222;letter-spacing:-0.2px">Hujan</div>
<div class="a" style="left:1201px;top:695.500px;width:40px;text-align:center;font-size:8px;line-height:10px;color:#222;letter-spacing:-0.2px">15:18</div>
<div class="a" style="left:1196px;top:707.500px;width:50px;text-align:center;font-size:8px;line-height:10px;color:#222;letter-spacing:-0.25px">05/04/2022</div>
<style>
.zl{height:12.500px;background:rgba(30,30,30,.72);border-radius:0 2px 0 0}
.zt{font-size:8.500px;line-height:10px;color:#f2f2f2;left:1046.500px}
</style>
<div class="a" style="left:969px;top:87px;width:296px;height:599.500px;background:#1c1c1c;border-radius:2px;box-shadow:0 0 3px rgba(0,0,0,.45)"></div>
<div class="a" style="left:1032px;top:92px;width:171px;height:587.500px;background:#232323"></div>
<div class="a" style="left:1032px;top:189.500px;width:171px;height:2px;background:#1c1c1c"></div>
<div class="a" style="left:1032px;top:287.500px;width:171px;height:2px;background:#1c1c1c"></div>
<div class="a" style="left:1032px;top:581.500px;width:171px;height:2px;background:#1c1c1c"></div>
<svg class="a" style="left:1032px;top:92px" width="171" height="490" viewBox="0 0 171 490">
 <defs>
  <filter id="b1" x="-20%" y="-20%" width="140%" height="140%"><feGaussianBlur stdDeviation="1.2"/></filter>
  <filter id="b2" x="-20%" y="-20%" width="140%" height="140%"><feGaussianBlur stdDeviation="2.5"/></filter>
  <filter id="b3" x="-20%" y="-20%" width="140%" height="140%"><feGaussianBlur stdDeviation="0.6"/></filter>
  <clipPath id="c1"><rect x="49" y="1" width="72" height="96.500"/></clipPath>
  <clipPath id="c2"><rect x="49" y="99" width="72" height="96.500"/></clipPath>
  <clipPath id="c3"><rect x="0" y="197" width="171" height="96.500"/></clipPath>
  <clipPath id="c4"><rect x="0" y="295" width="171" height="96.500"/></clipPath>
  <clipPath id="c5"><rect x="0" y="393" width="171" height="96.500"/></clipPath>
  <linearGradient id="g1" x1="0" y1="0" x2="1" y2="0.600"><stop offset="0" stop-color="#aeab93"/><stop offset="0.350" stop-color="#dedbc4"/><stop offset="1" stop-color="#e6e9ea"/></linearGradient>
  <linearGradient id="g3" x1="0" y1="0" x2="0.300" y2="1"><stop offset="0" stop-color="#7d9468"/><stop offset="0.550" stop-color="#a3ad7c"/><stop offset="1" stop-color="#b5ab60"/></linearGradient><pattern id="batik" width="5" height="5" patternUnits="userSpaceOnUse"><rect width="5" height="5" fill="#4a3a22"/><rect x="0" y="0" width="2" height="2" fill="#8a7448"/><rect x="3" y="2.500" width="1.500" height="2" fill="#2a2014"/><rect x="2" y="1" width="1" height="1" fill="#a08a5a"/></pattern>
 </defs>
 <g clip-path="url(#c1)">
  <rect x="49" y="1" width="72" height="97" fill="url(#g1)"/>
  <g filter="url(#b2)">
   <path d="M49 12L123 50L123 62L100 62L100 100L49 100z" fill="#e9e0b6"/><path d="M49 34l0 66 46 0 0-34z" fill="#ecdfa6"/>
   <path d="M49 1L78 1L49 24z" fill="#aaa78f"/><path d="M49 4L58 1L123 40L123 53L49 14z" fill="#c0b68c"/>
   <path d="M70 1l53 0 0 34z" fill="#e7eaea"/>
   <rect x="100" y="58" width="24" height="42" fill="#e2e8e4"/>
   <path d="M49 40l30 20 0 40-30 0z" fill="#efe6b8"/>
  </g>
  <g filter="url(#b3)">
   <path d="M68 98c2-8 8-12 16-12s15 3 18 9l2 3z" fill="#a8516c"/>
   <path d="M79 84l5 4 5-4 0-4-10 0z" fill="#a97c62"/>
   <ellipse cx="84" cy="72" rx="8.300" ry="10.500" fill="#b8896e"/>
   <path d="M74.500 70c-2-10 3-15.500 9.500-15.500s11.500 5 9.500 15c-1.500-4.500-4-7-9.500-7s-8 2.500-9.500 7.500z" fill="#262220"/>
   <path d="M77.500 71h13" stroke="#3a2e28" stroke-width="1.300"/><path d="M81 79.500h6" stroke="#7a5444" stroke-width="1"/>
   <path d="M80 82c2 1.500 6 1.500 8 0l-1 2.500h-6z" fill="#5a4238" opacity="0.500"/>
  </g>
 </g>
 <g clip-path="url(#c2)">
  <rect x="49" y="99" width="72" height="97" fill="#fbfbfb"/>
  <g filter="url(#b3)">
   <path d="M49 180c2-14 8-26 20-29l14-3 22 4c10 3 14 12 15 24l0 20-71 0z" fill="#1b2334"/>
   <ellipse cx="92" cy="139" rx="11.500" ry="15" fill="#c8a28c"/>
   <path d="M81 131c1-8 7-11 13-10s10 6 9 13c-3-5-8-8-13-8s-7 2-9 5z" fill="#d6b6a2"/>
   <path d="M102 126c2 4 2 10 1 14l-2-1z" fill="#3a3230"/>
   <path d="M85 156c4 1 9-1 12-5l3-8 3 1-2 12-5 7 6 34-12 0-4-28z" fill="#c49a82"/>
   <path d="M85 142l8 1M96 137l5 0" stroke="#5a4238" stroke-width="0.900" fill="none"/>
  </g>
 </g>
 <g clip-path="url(#c3)">
  <rect x="0" y="197" width="171" height="97" fill="#060606"/>
  <g filter="url(#b1)">
   <path d="M0 280c10-6 30-8 40-14l18-10c25 2 42 8 52 16l18 24-128 0z" fill="#5c7a2c"/>
   <path d="M0 212c6-10 20-14 32-12s22 10 24 22l2 26c0 16-10 30-24 34l-26 2-8-6z" fill="url(#g3)"/>
   <path d="M0 213c6-11 20-15 33-13s22 11 23 24l1 20c-6-2-10-8-12-14-4-8-12-12-22-13s-18 1-23 6z" fill="#506c48"/>
   <path d="M10 262c8 8 22 12 36 8l8 14-44 0z" fill="#b4a552"/>
   <path d="M49 248c3-3 7-2 8 2l-1 12-6 4z" fill="#95a070"/>
   <path d="M0 250l4 6 2 16-6 4z" fill="#101010"/>
  </g>
 </g>
 <g clip-path="url(#c4)">
  <rect x="0" y="295" width="171" height="97" fill="#15100e"/>
  <rect x="0" y="295" width="171" height="19" fill="#e3d6c4"/>
  <rect x="61" y="296" width="77" height="18" fill="#b7bfc2"/><rect x="61" y="304" width="77" height="9" fill="#c2b094"/><rect x="58" y="295" width="3" height="19" fill="#3a2e28"/><rect x="138" y="295" width="3" height="19" fill="#3a2e28"/>
  <g filter="url(#b3)">
  <circle cx="26" cy="305" r="6" fill="#cdb83a"/><rect x="23" y="309" width="6" height="5" fill="#b8a88a"/>
  <ellipse cx="151" cy="305" rx="8" ry="6" fill="#4e7a44"/><rect x="147" y="310" width="8" height="5" fill="#7aa060"/>
  <rect x="0" y="314" width="171" height="4" fill="#0e0a09"/>
  <rect x="2" y="330" width="42" height="27" fill="#c4a48c"/><rect x="6" y="334" width="4" height="23" fill="#e8e0d0"/><rect x="14" y="336" width="5" height="21" fill="#b8c49a"/><rect x="22" y="334" width="6" height="23" fill="#d06a7a"/><rect x="30" y="338" width="5" height="19" fill="#d88a5a"/><rect x="37" y="336" width="5" height="21" fill="#e8d8c0"/>
  <rect x="50" y="333" width="23" height="24" fill="#d9b59a"/><rect x="53" y="334" width="4" height="23" fill="#e0705a"/><rect x="60" y="336" width="5" height="21" fill="#f0e6d0"/><rect x="67" y="338" width="4" height="19" fill="#c8b070"/>
  <rect x="128" y="336" width="22" height="21" fill="#b9a596"/><rect x="131" y="337" width="3" height="20" fill="#e8e0d6"/><rect x="138" y="338" width="4" height="19" fill="#7a3a34"/><rect x="145" y="337" width="4" height="20" fill="#d8d0c4"/>
  <rect x="152" y="346" width="19" height="11" fill="#a89880"/><rect x="138" y="330" width="16" height="8" fill="#c8c0b4"/>
  <rect x="46" y="318" width="3" height="40" fill="#0e0a09"/><rect x="124" y="318" width="3" height="40" fill="#0e0a09"/>
  <rect x="0" y="357" width="171" height="3" fill="#2a201c"/>
  <circle cx="141" cy="378" r="4" fill="#b8b08a"/><circle cx="158" cy="378" r="4" fill="#b8b08a"/>
  </g>
  <g filter="url(#b1)">
   <path d="M48 392c4-10 14-18 28-22l40 0c14 4 26 12 34 22z" fill="#e6e3df"/>
   <ellipse cx="96" cy="357" rx="21.500" ry="29" fill="#b98c72"/>
   <path d="M74 352c-2-20 6-33 22-34s26 10 25 32c-3-10-8-18-14-20-10-3-24-1-28 6-3 5-4 10-5 16z" fill="#17120f"/>
   <path d="M82 351l9 1M101 351l9-1M88 380h14" stroke="#6a4a3c" stroke-width="1.500" fill="none"/>
  </g>
 </g>
 <g clip-path="url(#c5)">
  <rect x="0" y="393" width="171" height="97" fill="#d8cd9e"/>
  <rect x="0" y="393" width="171" height="3" fill="#c8bc8a"/>
  <rect x="0" y="445" width="171" height="24" fill="#5c3a2a"/>
  <rect x="34" y="398" width="84" height="53" fill="#6b4c3a"/>
  <rect x="38.500" y="403" width="75.500" height="46" fill="#e5e1df"/>
  <g filter="url(#b3)">
  <path d="M40 405h11c-2 14 0 30 4 42h-15z" fill="#b02828"/><path d="M113 405h-11c2 14 0 30-4 42h15z" fill="#b02828"/>
  <circle cx="76" cy="413" r="3.500" fill="#c23a30"/>
  <rect x="58" y="426" width="33" height="4.500" fill="#3a3030"/><rect x="56" y="436" width="40" height="1.500" fill="#9a9090"/><rect x="62" y="420" width="26" height="1.200" fill="#8a8080"/><rect x="58" y="443" width="38" height="1.200" fill="#9a9090"/>
  <path d="M2 412l5 0 1 22-6 0z" fill="#b23c30"/><path d="M2 434l6 0 0 32-6 4z" fill="#e8e4e0"/>
  <path d="M155 415l4 0c2 14 6 30 8 44l-6 10-8-4z" fill="#e6e2dc"/><circle cx="158" cy="440" r="2.500" fill="#c0a050"/>
  <rect x="20" y="395" width="10" height="4" fill="#4a4038"/><rect x="121" y="395" width="10" height="4" fill="#4a4038"/>
  <path d="M17 468c0-8 3-13 8-14h7c4 1 6 6 6 14z" fill="#171b24"/><ellipse cx="28.500" cy="452" rx="4" ry="5" fill="#3a2e28"/><rect x="26" y="452.500" width="6" height="3.500" rx="1" fill="#9ac8a4"/>
  <path d="M79 468c0-6 2-9 5-10h8c3 1 5 4 5 10z" fill="#bcc8d6"/><ellipse cx="87.500" cy="455" rx="3.500" ry="4.500" fill="#3a2a24"/><rect x="85" y="456" width="5.500" height="3.500" rx="1" fill="#e8e8e8"/>
  <rect x="49" y="461" width="12" height="8" rx="1.500" fill="#9c9a96"/><rect x="101" y="462" width="12" height="7" rx="1.500" fill="#9c9a96"/><rect x="121.500" y="462" width="12" height="7" rx="1.500" fill="#9c9a96"/>
  </g>
  <rect x="0" y="468" width="171" height="22" fill="url(#batik)"/>
  <rect x="0" y="468" width="171" height="2" fill="#7a6a50"/>
 </g>
</svg>
<div class="a zl" style="left:1032px;top:176.500px;width:97px"></div>
<div class="a zl" style="left:1032px;top:274.500px;width:85px"></div>
<div class="a zl" style="left:1032px;top:372.500px;width:96px"></div>
<div class="a zl" style="left:1032px;top:470.500px;width:75px"></div>
<div class="a zl" style="left:1032px;top:568.500px;width:72px"></div>
<div class="a zl" style="left:1032px;top:666.500px;width:57px;background:#2e2e2e"></div>
<div class="a zt" style="top:177.500px;letter-spacing:-0.2px">Hensly_KPU MINTRA</div>
<div class="a zt" style="top:275.500px;letter-spacing:-0.07px">Fadly KPU Minsel</div>
<div class="a zt" style="top:373.500px;letter-spacing:-0.25px">KPU BOLMUT/IRFAN</div>
<div class="a zt" style="top:471.500px">Lahope Dikson</div>
<div class="a zt" style="top:569.500px;letter-spacing:-0.08px">KPU MANADO</div>
<div class="a zt" style="top:667.500px;letter-spacing:0.08px">KPU Mitra</div>
<div class="a" style="left:1090px;top:624.500px;font-size:11.200px;line-height:14px;font-weight:700;color:#fff">KPU Mitra</div>
<svg class="a" style="left:1034px;top:177px" width="10" height="504" viewBox="0 0 10 504">
 <defs><g id="mu"><rect x="3.600" y="1.500" width="2.800" height="6" rx="1.400" fill="#e8453c"/><path d="M2 6a3 3 0 0 0 6 0M5 9v2M3.500 11h3" fill="none" stroke="#e8453c" stroke-width="0.900"/><path d="M1.500 11l7-10" stroke="#e8453c" stroke-width="1.100"/></g></defs>
 <use href="#mu" y="0"/><use href="#mu" y="98"/><use href="#mu" y="196"/><use href="#mu" y="294"/><use href="#mu" y="392"/><use href="#mu" y="490"/>
</svg>
</div></body></html>
